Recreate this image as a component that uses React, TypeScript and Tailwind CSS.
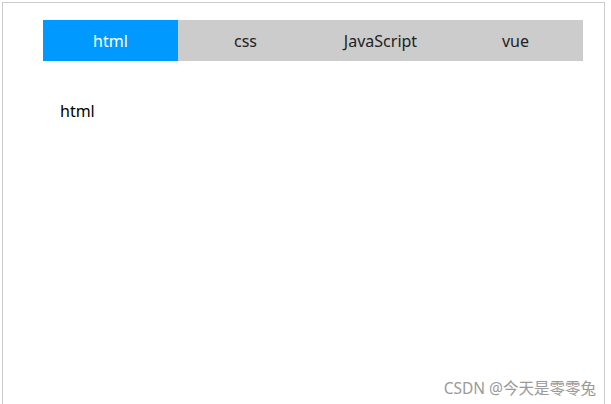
import React, { useState } from 'react'

const tabs = [
  { title: 'html', body: 'html' },
  { title: 'css', body: 'css' },
  { title: 'JavaScript', body: 'JavaScript' },
  { title: 'vue', body: 'vue' }
]

export default function App() {
  const [active, setActive] = useState(0)

  return (
    <div className="relative h-[404px] w-[611px] overflow-hidden bg-white font-['Noto_Sans','Noto_Sans_CJK_SC',sans-serif]">
      <div className="ml-[2px] mt-[2px] h-[420px] w-[603px] border border-[#cccccc] pl-[40px] pt-[17px]">
        <ul className="flex h-[41px] w-[540px] bg-[#cccccc]">
          {tabs.map((tab, index) => (
            <li
              key={tab.title}
              onClick={() => setActive(index)}
              className={
                index === active
                  ? 'flex w-[135px] cursor-pointer items-center justify-center bg-[#0099ff] text-[16px] text-white'
                  : 'flex w-[135px] cursor-pointer items-center justify-center text-[16px] text-[#222222]'
              }
            >
              {tab.title}
            </li>
          ))}
        </ul>

        <div className="pl-[17px] pt-[38px] text-[16px] leading-[24px] text-black">
          {tabs[active].body}
        </div>
      </div>

      <span className="absolute bottom-[6px] right-[15px] text-[15.5px] leading-[20px] text-[#9a9a9a]">
        CSDN @今天是零零兔
      </span>
    </div>
  )
}
